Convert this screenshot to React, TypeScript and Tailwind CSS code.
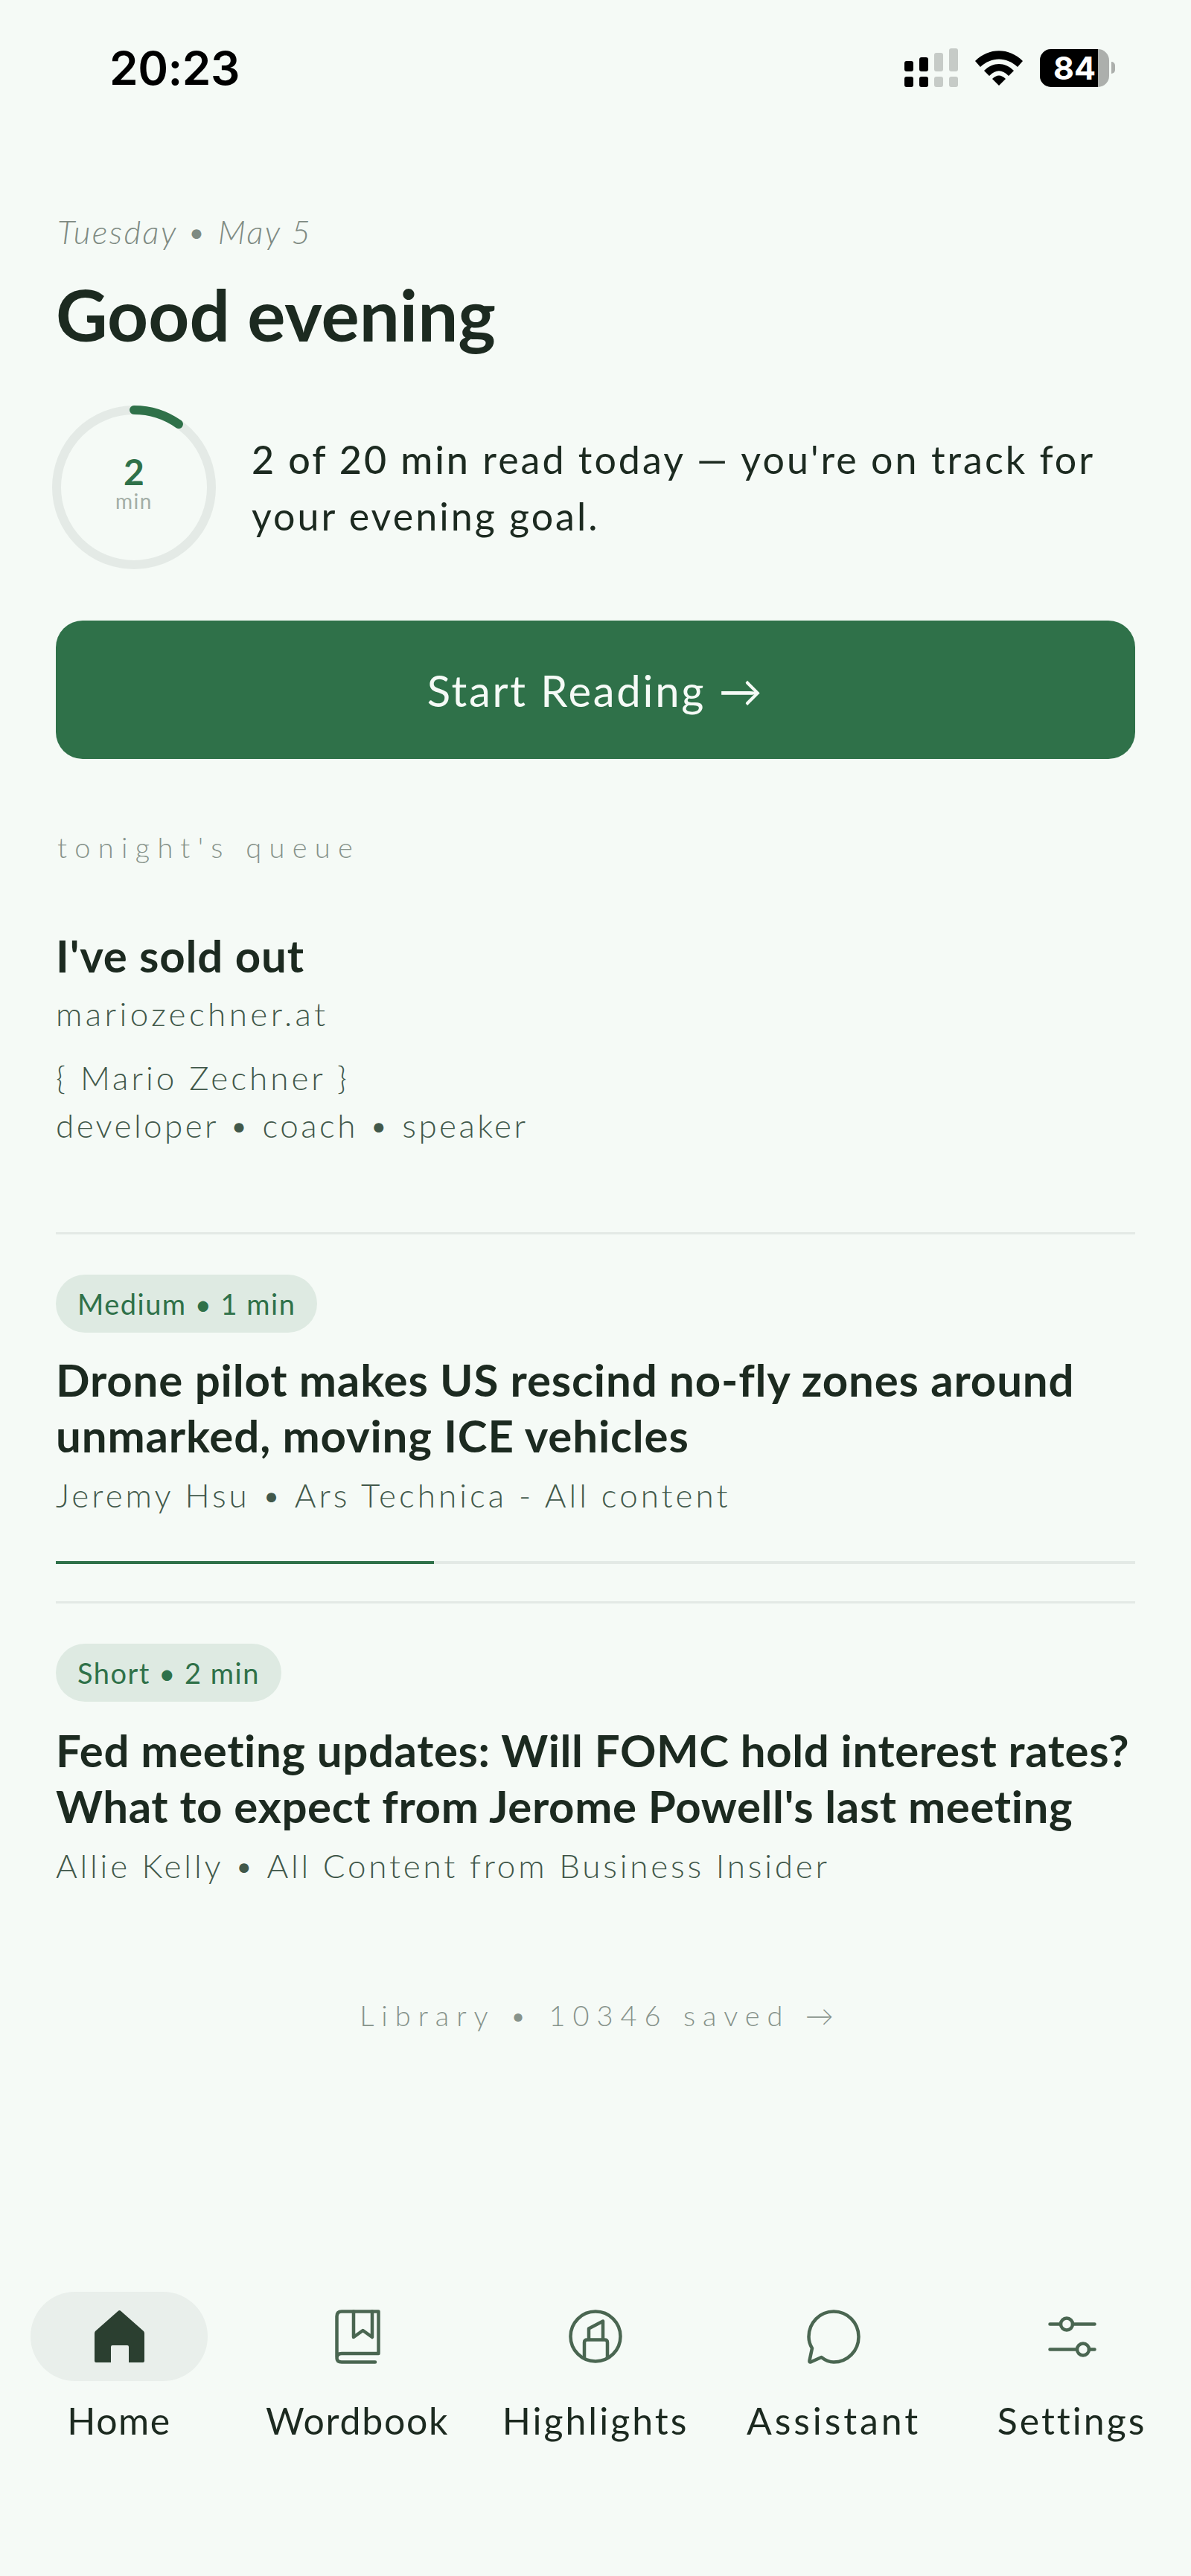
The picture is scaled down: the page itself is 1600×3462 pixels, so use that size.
const F = "font-['Lato','Noto_Sans',sans-serif]";

function Signal() {
  return (
    <svg width="72" height="52" viewBox="0 0 72 52" className="block">
      <rect x="0" y="17" width="12" height="14" rx="3" fill="#000" />
      <rect x="20" y="12" width="12" height="19" rx="3" fill="#000" />
      <rect x="40" y="6" width="12" height="25" rx="3" fill="#c6cbc7" />
      <rect x="60" y="0" width="12" height="31" rx="3" fill="#c6cbc7" />
      <rect x="0" y="38" width="12" height="14" rx="3" fill="#000" />
      <rect x="20" y="38" width="12" height="14" rx="3" fill="#000" />
      <rect x="40" y="38" width="12" height="14" rx="3" fill="#c6cbc7" />
      <rect x="60" y="38" width="12" height="14" rx="3" fill="#c6cbc7" />
    </svg>
  );
}

function Wifi() {
  return (
    <svg width="64" height="47" viewBox="0 0 64 47" className="block">
      <path d="M0 14 C18 -4.5 46 -4.5 64 14 L57 22 C42 8 22 8 7 22 Z" fill="#000" />
      <path d="M12 27 C24 15 40 15 52 27 L45 34 C36 25 28 25 19 34 Z" fill="#000" />
      <path d="M23 38 C29 32 35 32 41 38 L32 47 Z" fill="#000" />
    </svg>
  );
}

function Battery() {
  return (
    <div className="flex items-center">
      <div className="relative flex h-[51px] w-[93px] items-center overflow-hidden rounded-[15px] bg-[#acafac]">
        <div className="flex h-full w-[78px] items-center justify-end bg-black pr-[3px]">
          <span className="font-['Inter',sans-serif] text-[43px] font-bold leading-none text-white">84</span>
        </div>
      </div>
      <div className="ml-[3px] h-[16px] w-[5px] rounded-r-full bg-[#acafac]" />
    </div>
  );
}

function HomeIcon() {
  return (
    <svg width="67" height="70" viewBox="0 0 67 70" className="block">
      <path d="M33.5 0 Q35 0 36 1.5 L66 28 Q67 29.5 67 31 L67 68 Q67 70 65 70 L46 70 L46 49 Q46 47 44 47 L24 47 Q22 47 22 49 L22 70 L2 70 Q0 70 0 68 L0 31 Q0 29.5 1 28 L31 1.5 Q32 0 33.5 0 Z" fill="#2b3f30" />
    </svg>
  );
}

function BookIcon() {
  return (
    <svg width="61" height="73" viewBox="0 0 61 73" fill="none" stroke="#4a6651" strokeWidth="4.5" strokeLinecap="round" strokeLinejoin="round" className="block">
      <path d="M2.5 64 L2.5 9 Q2.5 2.5 9 2.5 L58.5 2.5 L58.5 59 L9 59 Q2.5 59 2.5 65 Q2.5 70.5 9 70.5 L54 70.5" />
      <path d="M25 2.5 L25 37 L37.5 28 L50 37 L50 2.5" />
    </svg>
  );
}

function HighlightIcon() {
  return (
    <svg width="72" height="72" viewBox="0 0 72 72" fill="none" stroke="#4a6651" strokeWidth="4.5" strokeLinecap="round" strokeLinejoin="round" className="block">
      <circle cx="36" cy="36" r="33.5" />
      <path d="M21 65 L21 44 Q21 40.5 25 40.5 L48 40.5 Q52 40.5 52 44 L52 65" />
      <path d="M27 40 L27 25.5 L46 15.5 L46 40" />
    </svg>
  );
}

function ChatIcon() {
  return (
    <svg width="72" height="73" viewBox="0 0 72 73" fill="none" stroke="#4a6651" strokeWidth="4.5" strokeLinecap="round" strokeLinejoin="round" className="block">
      <path d="M36 2.5 C54.5 2.5 69.5 17.5 69.5 36.5 C69.5 55.5 54.5 70.5 36 70.5 C30 70.5 24.5 68 19.5 64 L5 70.5 Q3 71 3.5 68.5 L7 52 C4 47 2.5 42 2.5 36.5 C2.5 17.5 17.5 2.5 36 2.5 Z" />
    </svg>
  );
}

function SlidersIcon() {
  return (
    <svg width="65" height="55" viewBox="0 0 65 55" fill="none" stroke="#4a6651" strokeWidth="4.5" strokeLinecap="round" className="block">
      <path d="M2.5 10.5 L16 10.5 M33 10.5 L62.5 10.5 M2.5 44.5 L38 44.5 M55 44.5 L62.5 44.5" />
      <circle cx="25" cy="10.5" r="8" />
      <circle cx="47" cy="44.5" r="8" />
    </svg>
  );
}

function Pill({ children }: { children: string }) {
  return (
    <div className="inline-flex h-[78px] items-center rounded-full bg-[#deeae2] px-[29px] text-[38px] tracking-[1.5px] text-[#2f7149]">
      {children}
    </div>
  );
}

function NavItem({ label, icon, active, track }: { label: string; icon: React.ReactNode; active?: boolean; track: string }) {
  return (
    <div className="flex flex-1 flex-col items-center">
      <div className={`flex h-[120px] w-[238px] items-center justify-center rounded-[60px] ${active ? "bg-[#e9efeb]" : ""}`}>
        {icon}
      </div>
      <span className={`mt-[18px] whitespace-nowrap text-[50px] leading-[70px] text-[#1c2a20] ${track}`}>{label}</span>
    </div>
  );
}

export default function App() {
  return (
    <div className={`${F} flex h-[3462px] w-[1600px] flex-col overflow-hidden bg-[#f5faf6] text-[#1c2a20]`}>
      <div className="flex h-[180px] shrink-0 items-start justify-between pl-[147px] pr-[102px] pt-[56px]">
        <span className="font-['Inter',sans-serif] text-[62px] font-semibold leading-[72px] tracking-[-0.5px] text-black">20:23</span>
        <div className="mt-[9px] flex items-center gap-[23px]">
          <Signal />
          <Wifi />
          <Battery />
        </div>
      </div>

      <div className="flex flex-1 flex-col px-[75px] pt-[100px]">
        <div className="pl-[2px] text-[44px] font-light italic leading-[62px] tracking-[2.4px] text-[#7f8b83]">Tuesday • May 5</div>
        <h1 className="mt-[20px] text-[96px] font-bold leading-[120px] text-[#1c2a20]">Good evening</h1>

        <div className="mt-[62px] flex items-center gap-[47px]">
          <div className="relative -ml-[6px] h-[222px] w-[222px] shrink-0">
            <svg width="222" height="222" viewBox="0 0 222 222" fill="none" className="block">
              <circle cx="111" cy="111" r="104" stroke="#e4eae6" strokeWidth="12" />
              <path d="M111 7 A104 104 0 0 1 171 26" stroke="#2f7149" strokeWidth="12" strokeLinecap="round" />
            </svg>
            <div className="absolute inset-0 flex -translate-y-[6px] flex-col items-center justify-center">
              <span className="text-[48px] font-bold leading-[48px] text-[#2f7149]">2</span>
              <span className="text-[28px] leading-[30px] tracking-[1.5px] text-[#a3aea6]">min</span>
            </div>
          </div>
          <p className="text-[52px] leading-[76px] tracking-[3px] text-[#1c2a20]">
            <span className="font-medium">2 of 20 min</span> read today — you're on track for your evening goal.
          </p>
        </div>

        <div className="mt-[68px] flex h-[186px] items-center justify-center rounded-[36px] bg-[#2f7149] text-[58px] tracking-[2.7px] text-[#f5faf6]">
          Start Reading →
        </div>

        <div className="mt-[92px] pl-[2px] text-[38px] font-light leading-[52px] tracking-[10.3px] text-[#87938b]">tonight's queue</div>

        <div className="mt-[82px] border-b-[3px] border-[#e3e9e5] pb-[112px]">
          <div className="text-[60px] font-bold leading-[76px] tracking-[0.85px]">I've sold out</div>
          <div className="mt-[10px] text-[44px] font-light leading-[60px] tracking-[4.4px] text-[#41584a]">mariozechner.at</div>
          <div className="mt-[24px] text-[44px] font-light leading-[64px] tracking-[4px] text-[#41584a]">{"{ Mario Zechner }"}</div>
          <div className="text-[44px] font-light leading-[64px] tracking-[3.4px] text-[#41584a]">developer • coach • speaker</div>
        </div>

        <div className="pt-[54px]">
          <Pill>Medium • 1 min</Pill>
          <div className="mt-[26px] text-[60px] font-bold leading-[75px] tracking-[0.85px]">
            Drone pilot makes US rescind no-fly zones around unmarked, moving ICE vehicles
          </div>
          <div className="mt-[12px] text-[44px] font-light leading-[60px] tracking-[4px] text-[#41584a]">
            Jeremy Hsu • Ars Technica - All content
          </div>
        </div>
        <div className="mt-[59px] h-[4px] bg-[#e3e9e5]">
          <div className="h-full w-[35%] bg-[#2f7149]" />
        </div>

        <div className="mt-[50px] border-t-[3px] border-[#e3e9e5] pt-[54px]">
          <Pill>Short • 2 min</Pill>
          <div className="mt-[28px] text-[60px] font-bold leading-[75px] tracking-[0.6px]">
            Fed meeting updates: Will FOMC hold interest rates? What to expect from Jerome Powell's last meeting
          </div>
          <div className="mt-[12px] text-[44px] font-light leading-[60px] tracking-[3.8px] text-[#41584a]">
            Allie Kelly • All Content from Business Insider
          </div>
        </div>

        <div className="mt-[144px] pl-[13px] text-center text-[38px] font-light leading-[54px] tracking-[10px] text-[#87938b]">
          Library • 10346 saved →
        </div>
      </div>

      <div className="flex h-[382px] shrink-0 items-start">
        <NavItem label="Home" icon={<HomeIcon />} active track="tracking-[1.5px]" />
        <NavItem label="Wordbook" icon={<BookIcon />} track="tracking-[1.7px]" />
        <NavItem label="Highlights" icon={<HighlightIcon />} track="tracking-[3px]" />
        <NavItem label="Assistant" icon={<ChatIcon />} track="tracking-[3.9px]" />
        <NavItem label="Settings" icon={<SlidersIcon />} track="tracking-[3px]" />
      </div>
    </div>
  );
}
